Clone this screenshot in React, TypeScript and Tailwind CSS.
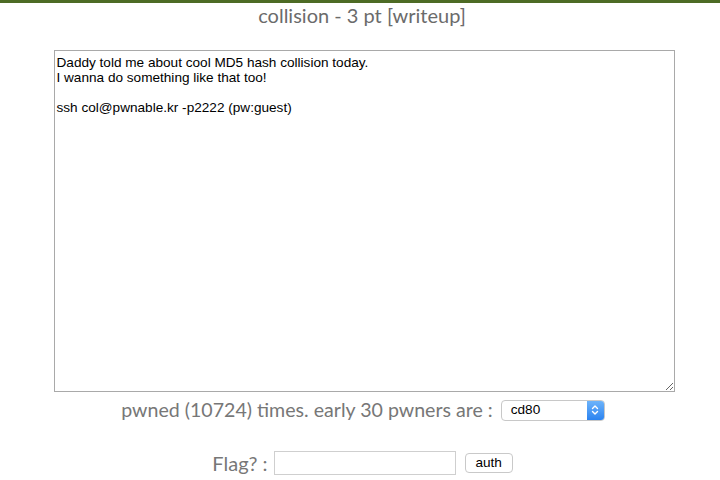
import { useState } from 'react';

const intro = `Daddy told me about cool MD5 hash collision today.
I wanna do something like that too!

ssh col@pwnable.kr -p2222 (pw:guest)`;

export default function App() {
  const [flag, setFlag] = useState('');

  return (
    <div className="w-[720px] h-[480px] overflow-hidden bg-white">
      <div className="h-[3px] bg-[#4d6b25]" />

      {/* Title */}
      <div className="text-center ml-[4px] text-[20px] leading-[24px] text-[#6b6b6b] font-['Lato',sans-serif]">
        collision - 3 pt [writeup]
      </div>

      {/* Description */}
      <div className="flex justify-center pl-[8px] mt-[23px]">
        <textarea
          defaultValue={intro}
          className="w-[621px] h-[342px] border border-[#a9a9a9] px-[2px] pt-[4px] text-[13.6px] leading-[15px] text-black font-['Liberation_Sans',Arial,sans-serif] outline-none"
        />
      </div>

      {/* Pwners */}
      <div className="flex items-center justify-center gap-[8px] mt-[6px] h-[24px] pl-[6px]">
        <span className="text-[19.6px] leading-[22px] text-[#777] font-['Lato',sans-serif]">
          pwned (10724) times. early 30 pwners are :
        </span>
        <div className="flex items-center w-[104px] h-[21px] border border-[#c8c8c8] rounded-[4px] bg-white overflow-hidden">
          <span className="flex-1 pl-[9px] text-[13.6px] text-black font-['Liberation_Sans',Arial,sans-serif]">cd80</span>
          <div className="w-[17px] h-full bg-gradient-to-b from-[#6cb3fa] to-[#2a83f0] flex items-center justify-center">
            <svg width="8" height="12" viewBox="0 0 8 12" fill="none" stroke="white" strokeWidth="1.4" strokeLinecap="round" strokeLinejoin="round">
              <path d="M1.5 4.5 L4 2 L6.5 4.5" />
              <path d="M1.5 7.5 L4 10 L6.5 7.5" />
            </svg>
          </div>
        </div>
      </div>

      {/* Flag */}
      <div className="flex items-center justify-center mt-[28px] h-[26px] pl-[5px]">
        <span className="text-[20px] leading-[22px] text-[#777] font-['Lato',sans-serif] mr-[6px]">Flag? :</span>
        <input
          value={flag}
          onChange={(e) => setFlag(e.target.value)}
          className="w-[182px] h-[24px] border border-[#cfcfcf] outline-none px-1 text-[13px]"
        />
        <button className="ml-[9px] w-[48px] h-[20px] border border-[#c9c9c9] rounded-[4px] bg-white text-[13.6px] leading-[18px] text-black font-['Liberation_Sans',Arial,sans-serif]">
          auth
        </button>
      </div>
    </div>
  );
}
